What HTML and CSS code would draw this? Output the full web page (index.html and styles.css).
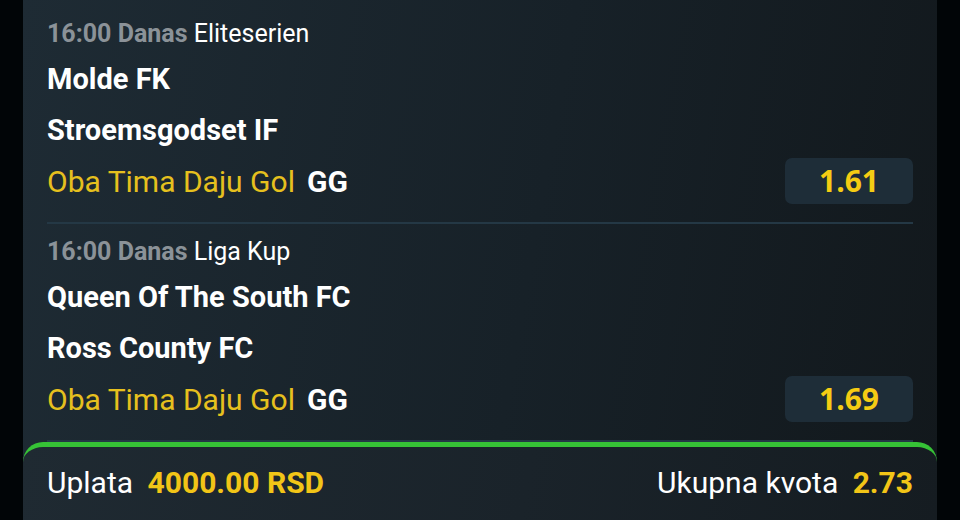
FILE: index.html
```html
<!doctype html>
<html lang="sr">
  <head>
    <title>Tiket</title>
    <meta name="viewport" content="width=device-width, initial-scale=1" />
    <link rel="stylesheet" href="styles.css">
  </head>
  <body>
    <div class="frame">
      <div class="ticket">
        <div class="list">
          <div class="match">
            <div class="meta"><b>16:00 Danas</b> Eliteserien</div>
            <div class="team">Molde FK</div>
            <div class="team">Stroemsgodset IF</div>
            <div class="bet">
              <span class="market">Oba Tima Daju Gol</span>
              <span class="pick">GG</span>
              <span class="odd">1.61</span>
            </div>
          </div>
          <div class="match">
            <div class="meta"><b>16:00 Danas</b> Liga Kup</div>
            <div class="team">Queen Of The South FC</div>
            <div class="team">Ross County FC</div>
            <div class="bet">
              <span class="market">Oba Tima Daju Gol</span>
              <span class="pick">GG</span>
              <span class="odd">1.69</span>
            </div>
          </div>
        </div>
        <div class="summary">
          <div class="stake">Uplata <span class="val">4000.00 RSD</span></div>
          <div class="total">Ukupna kvota <span class="val">2.73</span></div>
        </div>
      </div>
    </div>
  </body>
</html>
```

FILE: styles.css
```css
html,
body {
  margin: 0;
  height: 100%;
  background-color: #010507;
}
body {
  font-family: Roboto, "Liberation Sans", sans-serif;
  color: #fff;
  overflow: hidden;
}
.frame {
  height: 520px;
  padding: 0 23px;
}
.ticket {
  height: 100%;
  display: flex;
  flex-direction: column;
  background: linear-gradient(100deg, #1e2b34 0%, #172128 55%, #12181c 100%);
}
.list {
  flex: 1;
  padding: 6px 24px 0;
}
.match {
  padding: 8px 0 16px;
  border-bottom: 2px solid #243845;
}
.meta {
  font-size: 25px;
  line-height: 40px;
  color: #fff;
}
.meta b {
  color: #8b9298;
}
.team {
  font-size: 29px;
  font-weight: 700;
  line-height: 51px;
}
.bet {
  display: flex;
  align-items: center;
  height: 50px;
}
.market {
  font-size: 30px;
  color: #e6c01e;
}
.pick {
  margin-left: 12px;
  font-size: 30px;
  font-weight: 700;
}
.odd {
  margin-left: auto;
  width: 128px;
  height: 46px;
  line-height: 46px;
  text-align: center;
  border-radius: 7px;
  background-color: #1e2d38;
  color: #f5cc13;
  font-family: "Open Sans", sans-serif;
  font-size: 30px;
  font-weight: 700;
}
.summary {
  height: 80px;
  box-sizing: border-box;
  display: flex;
  justify-content: space-between;
  padding: 16px 24px 0;
  border-top: 5px solid #36c236;
  border-radius: 20px 20px 0 0;
  background: linear-gradient(100deg, #1f2a32 0%, #1a232a 55%, #151c21 100%);
  font-size: 30px;
  line-height: 40px;
}
.val {
  margin-left: 7px;
  color: #f2c517;
  font-weight: 700;
}
```
